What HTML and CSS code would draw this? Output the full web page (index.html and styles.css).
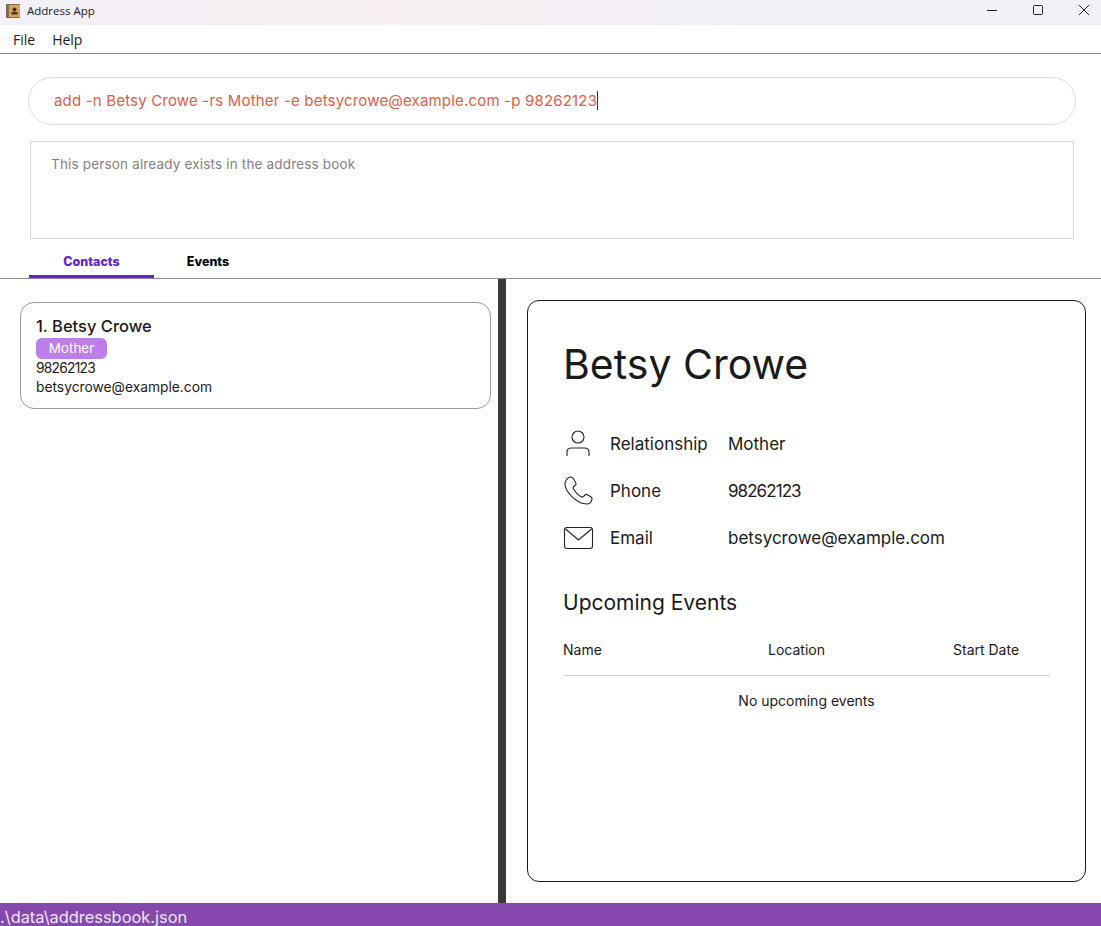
FILE: index.html
```html
<!DOCTYPE html>
<html lang="en">
<head>
    <meta charset="UTF-8">
    <title>Address App</title>
    <link rel="stylesheet" href="styles.css">
</head>
<body>
    <div class="title-bar">
        <svg class="app-icon" width="14" height="14" viewBox="0 0 14 14">
            <rect x="0" y="0" width="14" height="14" fill="#d2a45c"/>
            <rect x="0" y="0" width="3" height="14" fill="#7c6a58"/>
            <rect x="3" y="0" width="11" height="1" fill="#8a6a3a"/>
            <rect x="3" y="13" width="11" height="1" fill="#8a6a3a"/>
            <circle cx="8.500" cy="5.500" r="2" fill="#4a3416"/>
            <rect x="5.500" y="8" width="6" height="2.500" fill="#4a3416"/>
        </svg>
        <span class="app-name">Address App</span>
        <div class="window-buttons">
            <svg width="12" height="12" viewBox="0 0 12 12"><path d="M1 6.500h10" stroke="#222" fill="none"/></svg>
            <svg width="12" height="12" viewBox="0 0 12 12"><rect x="1.500" y="1.500" width="9" height="9" rx="1" stroke="#222" fill="none"/></svg>
            <svg width="12" height="12" viewBox="0 0 12 12"><path d="M1 1l10 10M11 1L1 11" stroke="#222" fill="none"/></svg>
        </div>
    </div>

    <div class="menu-bar">
        <span>File</span>
        <span>Help</span>
    </div>

    <div class="command-box">
        <span class="command-text">add -n Betsy Crowe -rs Mother -e betsycrowe@example.com -p 98262123</span><span class="caret"></span>
    </div>

    <div class="result-box">This person already exists in the address book</div>

    <div class="tabs">
        <div class="tab active">Contacts</div>
        <div class="tab events-tab">Events</div>
    </div>

    <div class="main">
        <div class="list-pane">
            <div class="person-card">
                <div class="person-name">1. Betsy Crowe</div>
                <div class="tag">Mother</div>
                <div class="person-line digits">98262123</div>
                <div class="person-line">betsycrowe@example.com</div>
            </div>
        </div>
        <div class="divider"></div>
        <div class="detail-pane">
            <div class="detail-card">
                <h1 class="detail-name">Betsy Crowe</h1>

                <div class="info-row">
                    <svg class="info-icon" width="32" height="32" viewBox="0 0 32 32" fill="none" stroke="#222" stroke-width="1.100">
                        <circle cx="15" cy="9" r="6"/>
                        <path d="M4 28v-4c0-2.500 2-4 4.500-4h13c2.500 0 4.500 1.500 4.500 4v4"/>
                    </svg>
                    <span class="info-label">Relationship</span>
                    <span>Mother</span>
                </div>
                <div class="info-row">
                    <svg class="info-icon" width="32" height="32" viewBox="0 0 32 32" fill="none" stroke="#222" stroke-width="1.100">
                        <path d="M3 5.500c1-1.800 3-3.500 5-3.500 1 0 1.500.5 2 1.300l2.800 4.500c.5 1 .3 1.800-.5 2.500l-1.800 1.700c-.5.5-.5 1-.2 1.600 1.800 3.500 4.500 6.500 8.300 8.400.6.300 1.100.2 1.600-.3l1.800-1.700c.8-.7 1.600-.8 2.500-.2l3.500 2.200c1 .6 1.300 1.400 1 2.400-.5 2-2.300 4.600-5 4.600C13 29 2 16 2 9c0-1.300.4-2.500 1-3.500z"/>
                    </svg>
                    <span class="info-label">Phone</span>
                    <span class="digits">98262123</span>
                </div>
                <div class="info-row">
                    <svg class="info-icon" width="32" height="32" viewBox="0 0 32 32" fill="none" stroke="#222" stroke-width="1.100">
                        <rect x="1.500" y="5.500" width="28" height="21" rx="2.500"/>
                        <path d="M2.500 7l13 11 13-11"/>
                    </svg>
                    <span class="info-label">Email</span>
                    <span>betsycrowe@example.com</span>
                </div>

                <h2 class="events-title">Upcoming Events</h2>
                <div class="events-head">
                    <span>Name</span>
                    <span>Location</span>
                    <span>Start Date</span>
                </div>
                <div class="events-empty">No upcoming events</div>
            </div>
        </div>
    </div>

    <div class="status-bar">.\data\addressbook.json</div>
</body>
</html>
```

FILE: styles.css
```css
body {
    font-family: Inter, "Open Sans", sans-serif;
    margin: 0;
    padding: 0;
    height: 926px;
    display: flex;
    flex-direction: column;
    overflow: hidden;
    background-color: #fff;
    color: #1a1a1a;
}

.title-bar {
    height: 25px;
    display: flex;
    align-items: center;
    padding: 0 0 4px 6px;
    background: linear-gradient(90deg, #f3f0f7, #f7eff3 35%, #f2f0f7 70%, #f2f0f7);
    box-sizing: border-box;
}

.app-name {
    font-family: "Open Sans", sans-serif;
    font-size: 11.500px;
    margin-left: 7px;
}

.window-buttons {
    margin-left: auto;
    margin-right: 11px;
    display: flex;
    gap: 34px;
    margin-top: -2px;
}

.menu-bar {
    height: 28px;
    display: flex;
    align-items: center;
    gap: 17px;
    padding-left: 13px;
    font-family: "Open Sans", sans-serif;
    font-size: 14px;
    border-bottom: 1px solid #8c8c8c;
}

.command-box {
    margin: 23px 25px 0 28px;
    height: 48px;
    box-sizing: border-box;
    border: 1px solid #dcdcdc;
    border-radius: 24px;
    padding: 0 0 2px 25px;
    display: flex;
    align-items: center;
    font-size: 15px;
    letter-spacing: 0.18px;
    color: #d9604a;
}

.caret {
    width: 1px;
    height: 19px;
    background-color: #333;
}

.result-box {
    margin: 16px 27px 0 30px;
    height: 98px;
    box-sizing: border-box;
    border: 1px solid #d6d6d6;
    padding: 14px 20px;
    font-size: 13.500px;
    letter-spacing: 0.17px;
    color: #85807f;
}

.tabs {
    margin-top: 6px;
    height: 34px;
    box-sizing: border-box;
    padding-left: 29px;
    display: flex;
    border-bottom: 1px solid #8c8c8c;
}

.tab {
    width: 125px;
    height: 33px;
    box-sizing: border-box;
    padding-top: 9px;
    text-align: center;
    font-size: 12.500px;
    font-weight: 800;
    color: #000;
}

.tab.active {
    color: #6220d8;
    border-bottom: 3px solid #6220d8;
}

.tab.events-tab {
    width: 108px;
}

.main {
    flex: 1;
    display: flex;
    min-height: 0;
}

.list-pane {
    width: 498px;
    box-sizing: border-box;
    padding: 23px 7px 0 20px;
}

.person-card {
    height: 107px;
    box-sizing: border-box;
    border: 1px solid #9a9a9a;
    border-radius: 14px;
    padding: 12px 15px;
}

.person-name {
    font-size: 16.500px;
    font-weight: 500;
    line-height: 22px;
}

.tag {
    width: 71px;
    height: 21px;
    line-height: 21px;
    margin-top: 1px;
    border-radius: 6px;
    background-color: #bd7deb;
    color: #fff;
    font-size: 13.500px;
    text-align: center;
}

.person-line {
    font-size: 13.800px;
    line-height: 19px;
}

.digits {
    letter-spacing: -0.055em;
}

.divider {
    width: 8px;
    background-color: #3a3a3a;
}

.detail-pane {
    flex: 1;
    padding: 21px 15px 21px 21px;
    display: flex;
}

.detail-card {
    flex: 1;
    box-sizing: border-box;
    border: 1px solid #1a1a1a;
    border-radius: 12px;
    padding: 36px 35px 0;
}

.detail-name {
    margin: 0 0 29px;
    font-size: 41px;
    font-weight: 400;
    line-height: 54px;
}

.info-row {
    height: 47px;
    display: flex;
    align-items: center;
    font-size: 17px;
}

.info-icon {
    width: 32px;
    margin-right: 15px;
}

.info-label {
    width: 118px;
}

.events-title {
    margin: 27px 0 0;
    font-size: 21px;
    font-weight: 400;
    line-height: 30px;
}

.events-head {
    margin-top: 23px;
    padding-bottom: 17px;
    display: grid;
    grid-template-columns: 205px 185px auto;
    font-size: 14px;
    border-bottom: 1px solid #cfcfcf;
}

.events-empty {
    margin-top: 16px;
    text-align: center;
    font-size: 14px;
}

.status-bar {
    height: 23px;
    line-height: 29px;
    background-color: #8549ae;
    color: #f0e4f8;
    font-size: 16.400px;
    overflow: hidden;
}
```
